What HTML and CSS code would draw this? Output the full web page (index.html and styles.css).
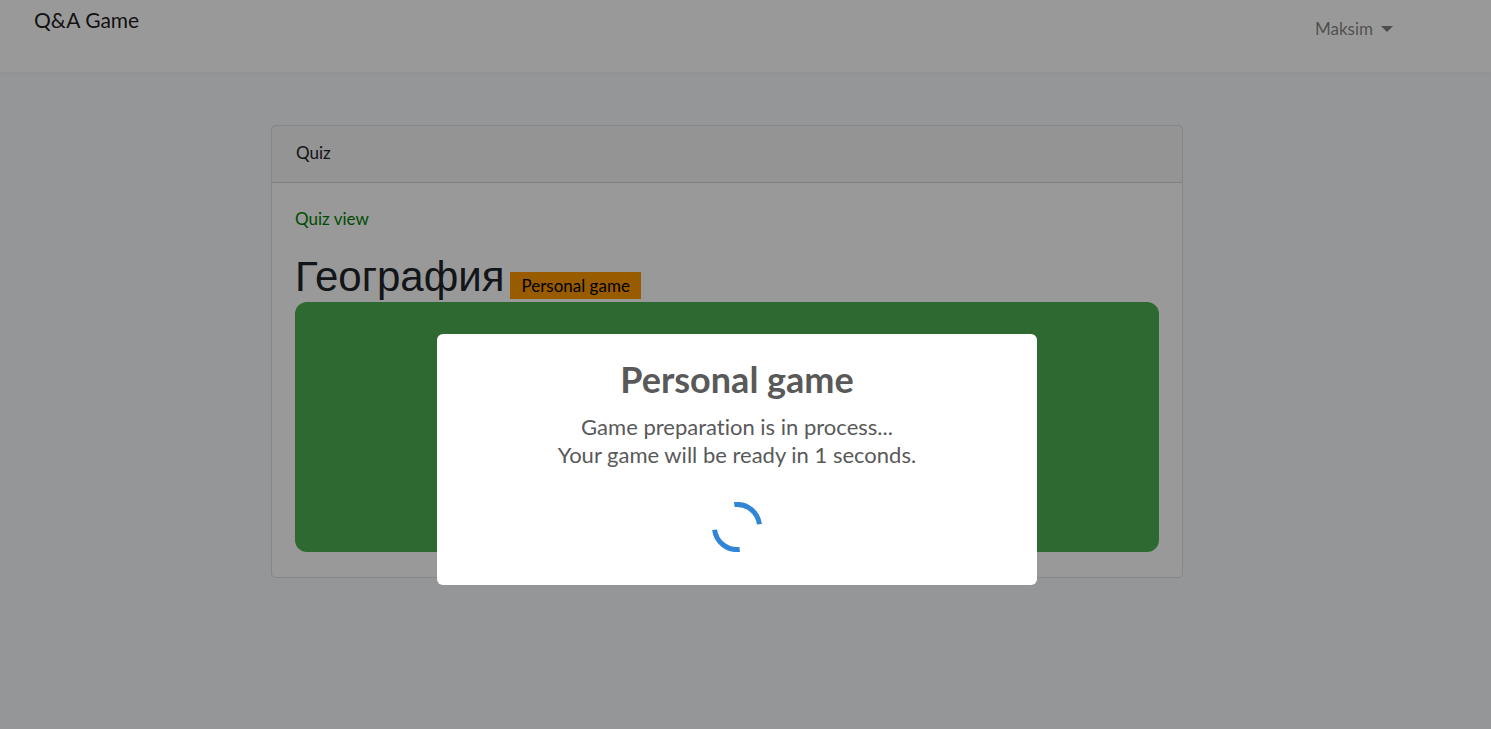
FILE: index.html
```html
<!DOCTYPE html>
<html lang="en">
<head>
<meta charset="utf-8">
<meta name="viewport" content="width=device-width, initial-scale=1">
<title>Q&amp;A Game</title>
<link rel="stylesheet" href="styles.css">
</head>
<body>
<header class="navbar">
  <a class="brand" href="#">Q&amp;A Game</a>
  <button class="user-menu" type="button" aria-haspopup="true">Maksim <span class="caret"></span></button>
</header>
<main class="page">
  <section class="card">
    <div class="card-header">Quiz</div>
    <div class="card-body">
      <a class="view-link" href="#">Quiz view</a>
      <div class="quiz-heading">
        <h1 class="quiz-title">География</h1>
        <span class="tag">Personal game</span>
      </div>
      <div class="board"></div>
    </div>
  </section>
</main>
<div class="overlay">
  <div class="dialog" role="dialog" aria-modal="true" aria-labelledby="dialog-title">
    <h2 class="dialog-title" id="dialog-title">Personal game</h2>
    <p class="dialog-text">Game preparation is in process...<br>Your game will be ready in 1 seconds.</p>
    <svg class="spinner" viewBox="0 0 50 50" aria-hidden="true">
      <path d="M22.3 2.6A22.5 22.5 0 0 1 47.4 22.3M27.7 47.4A22.5 22.5 0 0 1 2.6 27.7"/>
    </svg>
  </div>
</div>
</body>
</html>
```
FILE: styles.css
```css
* { box-sizing: border-box; }

body {
  margin: 0;
  min-height: 100vh;
  background: #f8fafc;
  color: #212529;
  font: 17px/27px Lato, "Liberation Sans", sans-serif;
  font-variant-ligatures: none;
}

a { text-decoration: none; }

.navbar {
  display: flex;
  justify-content: space-between;
  align-items: flex-start;
  padding: 6px 98px 30px 34px;
  background: #fff;
  box-shadow: 0 2px 4px rgba(0, 0, 0, 0.04);
}

.brand {
  color: rgba(0, 0, 0, 0.9);
  font-size: 21px;
}

.user-menu {
  display: flex;
  align-items: center;
  gap: 8px;
  margin-top: 9px;
  padding: 0;
  border: 0;
  background: none;
  color: rgba(0, 0, 0, 0.5);
  font: inherit;
}

.caret {
  border-top: 6px solid;
  border-right: 6px solid transparent;
  border-left: 6px solid transparent;
}

.page {
  display: flex;
  justify-content: center;
  padding: 53px 37px 24px 0;
}

.card {
  width: 912px;
  max-width: 100%;
  border: 1px solid rgba(0, 0, 0, 0.125);
  border-radius: 5px;
  background: #fff;
}

.card-header {
  padding: 13px 24px 16px;
  border-bottom: 1px solid rgba(0, 0, 0, 0.125);
  background: rgba(0, 0, 0, 0.03);
}

.card-body { padding: 22px 23px 25px; }

.view-link { color: #008000; }

.quiz-heading {
  display: flex;
  align-items: flex-end;
  gap: 6px;
  margin-top: 18px;
  padding-bottom: 3px;
}

.quiz-title {
  margin: 0;
  padding-top: 4px;
  font: 400 42px/45px "Liberation Sans", sans-serif;
}

.tag {
  padding: 0 11px;
  background: #ff9800;
  color: #000;
}

.board {
  height: 250px;
  border-radius: 12px;
  background: #4caf50;
}

.overlay {
  position: fixed;
  inset: 0;
  display: flex;
  justify-content: center;
  align-items: center;
  padding: 190px 17px 0 0;
  background: rgba(0, 0, 0, 0.4);
}

.dialog {
  width: 600px;
  max-width: 100%;
  padding: 23px 24px 33px;
  border-radius: 6px;
  background: #fff;
  color: #595959;
  text-align: center;
}

.dialog-title {
  margin: 0 0 12px;
  font-size: 36px;
  line-height: 44px;
  font-weight: 700;
}

.dialog-text {
  margin: 0 0 33px;
  font-size: 22px;
  line-height: 28px;
}

.spinner {
  display: block;
  width: 50px;
  height: 50px;
  margin: 0 auto;
  fill: none;
  stroke: #3085d6;
  stroke-width: 5;
}
```
